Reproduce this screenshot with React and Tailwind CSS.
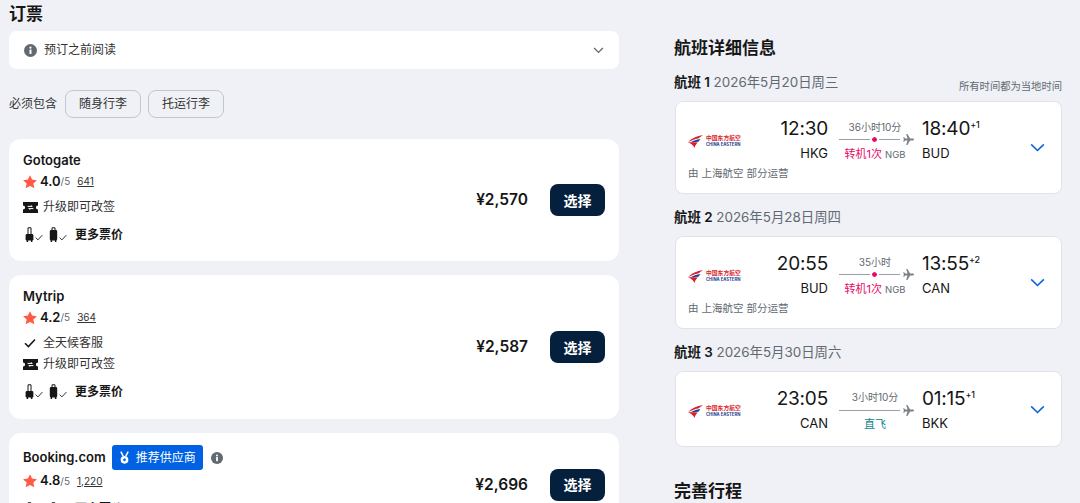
import React from "react";

const font = { fontFamily: '"Inter", "Noto Sans CJK SC", sans-serif' };

function InfoIcon({ className }) {
  return (
    <svg viewBox="0 0 12 12" className={className}>
      <circle cx="6" cy="6" r="6" fill="#626971" />
      <rect x="5.1" y="5" width="1.8" height="4.2" rx="0.4" fill="#fff" />
      <circle cx="6" cy="3.4" r="1" fill="#fff" />
    </svg>
  );
}

function Star() {
  return (
    <svg viewBox="0 0 14 14" className="w-[14px] h-[14px] shrink-0">
      <path d="M7 .2l2.100 4.400 4.800.6-3.500 3.300.9 4.800L7 11l-4.300 2.300.9-4.800L.1 5.200l4.800-.6z" fill="#ff5b45" />
    </svg>
  );
}

function Ticket() {
  return (
    <svg viewBox="0 0 15 11" className="w-[15px] h-[11px] shrink-0">
      <path d="M0 0h15v3.400a2 2 0 0 0 0 4.200V11H0V7.600a2 2 0 0 0 0-4.200z" fill="#161616" />
      <path d="M4.600 4.400h4.600l-1-1M10.400 6.600H5.800l1 1" stroke="#fff" strokeWidth="1" fill="none" />
    </svg>
  );
}

function Check({ className }) {
  return (
    <svg viewBox="0 0 12 10" className={className}>
      <path d="M1 5.200l3.400 3.400L11 1.400" stroke="currentColor" strokeWidth="1.500" fill="none" />
    </svg>
  );
}

function Bag({ big }) {
  return (
    <span className="flex items-end">
      <svg viewBox="0 0 9 15" className="w-[9px] h-[15px]">
        {big ? (
          <>
            <path d="M3 3V.8h3V3" stroke="#161616" strokeWidth="1" fill="none" />
            <rect x="0.8" y="3" width="7.400" height="10.500" rx="1.400" fill="#161616" />
            <rect x="1.600" y="13" width="1.500" height="2" fill="#161616" />
            <rect x="5.900" y="13" width="1.500" height="2" fill="#161616" />
          </>
        ) : (
          <>
            <path d="M3 7V.8h3V7" stroke="#161616" strokeWidth="1" fill="none" />
            <rect x="0.600" y="7" width="7.800" height="6.600" rx="1.400" fill="#161616" />
            <rect x="1.600" y="13" width="1.500" height="2" fill="#161616" />
            <rect x="5.900" y="13" width="1.500" height="2" fill="#161616" />
          </>
        )}
      </svg>
      <Check className="w-[8px] h-[7px] ml-[1px] mb-[1px] text-[#333]" />
    </span>
  );
}

function Medal() {
  return (
    <svg viewBox="0 0 12 14" className="w-[11px] h-[14px]">
      <path d="M2 0l2.600 5M10 0L7.400 5" stroke="#fff" strokeWidth="1.600" fill="none" />
      <circle cx="6" cy="9" r="4.200" fill="#fff" />
      <circle cx="6" cy="9" r="1.500" fill="#0062e3" />
    </svg>
  );
}

function Offer({ name, badge, rating, count, lines, price, className }) {
  return (
    <div className={`bg-white rounded-xl px-[14px] pt-[12px] flex justify-between items-center shrink-0 overflow-hidden ${className}`}>
      <div className="self-start">
        <div className="flex items-center min-h-[18px]">
          <span className="text-[13px] font-semibold text-[#161616]">{name}</span>
          {badge && (
            <>
              <span className="ml-[6px] h-[25px] w-[91px] bg-[#0062e3] rounded-[3px] flex items-center justify-center gap-[6px] text-white text-[12px]">
                <Medal />
                推荐供应商
              </span>
              <InfoIcon className="w-[12px] h-[12px] ml-[8px]" />
            </>
          )}
        </div>
        <div className="flex items-center h-[18px] mt-[2px]">
          <Star />
          <span className="ml-[3px] text-[13px] font-semibold text-[#161616]">{rating}</span>
          <span className="text-[10px] text-[#626971]">/5</span>
          <span className="ml-[7px] text-[10px] text-[#333] underline">{count}</span>
        </div>
        {lines.length > 0 ? (
          <div className="mt-[6px] mb-[8px] flex flex-col">
            {lines.map((l) => (
              <div key={l} className="flex items-center h-[21px] text-[12px] text-[#333]">
                <span className="w-[20px] flex">
                  {l === "全天候客服" ? <Check className="w-[12px] h-[10px] ml-[1px] text-[#161616]" /> : <Ticket />}
                </span>
                {l}
              </div>
            ))}
          </div>
        ) : (
          <div className="h-[10px]" />
        )}
        <div className="flex items-center h-[18px] pl-[2px]">
          <Bag />
          <span className="w-[6px]" />
          <Bag big />
          <span className="ml-[8px] text-[12px] font-semibold text-[#161616]">更多票价</span>
        </div>
      </div>
      <div className="flex items-center gap-[22px] -mt-[12px]">
        <span className="text-[15.500px] font-semibold text-[#161616]">{price}</span>
        <button className="w-[55px] h-[32px] rounded-lg bg-[#05203c] text-white text-[14px] font-semibold">选择</button>
      </div>
    </div>
  );
}

function Logo() {
  return (
    <div className="w-[54px] flex items-center shrink-0">
      <svg viewBox="0 0 15 13" className="w-[15px] h-[13px] shrink-0">
        <path d="M15 0C9 .8 3.500 3.400 0 7.200 3.400 5.400 6.500 4.300 10.200 3.600 11.800 2.400 13.400 1 15 0z" fill="#d81e2c" />
        <path d="M12.500 4C8.500 4.600 5.200 5.800 2.600 7.300 5.400 6.900 8 6.700 10.400 6.700z" fill="#1c3f94" />
        <path d="M0 7.400C3 8.200 5.200 10 6.600 13 7 10.800 8 9 9.800 7.600 6.600 7.400 3.500 7.200 0 7.400z" fill="#d81e2c" />
      </svg>
      <div className="ml-[3px] flex flex-col items-start leading-none">
        <span className="text-[5.800px] font-bold text-[#d81e2c] leading-[6.500px] whitespace-nowrap">中国东方航空</span>
        <span className="text-[4.200px] font-bold text-[#1c3f94] leading-[5.500px] whitespace-nowrap">CHINA EASTERN</span>
      </div>
    </div>
  );
}

function Plane() {
  return (
    <svg viewBox="0 0 12 12" className="w-[11px] h-[11px] shrink-0 ml-[3px]">
      <path d="M12 6c0-.6-.6-1-1.300-1H7.800L4.800 0H3.500l1.400 5H2.400L1.200 3.500H.2L1 6l-.8 2.500h1L2.400 7h2.500l-1.400 5h1.300l3-5h2.900C11.400 7 12 6.600 12 6z" fill="#7c8089" />
    </svg>
  );
}

function Flight({ label, date, note, dep, depCode, arr, plus, arrCode, dur, stop, operated }) {
  return (
    <div className="shrink-0">
      <div className="flex items-baseline justify-between h-[20px]">
        <div className="text-[13.400px] text-[#626971] -ml-px">
          <span className="font-semibold text-[#161616]">{label}</span> {date}
        </div>
        {note && <span className="text-[10.300px] text-[#626971] relative top-[3px]">{note}</span>}
      </div>
      <div className={`mt-[9px] bg-white rounded-lg border border-[#e0e4e9] pl-[12px] flex items-center ${operated ? "h-[93px]" : "h-[76px]"}`}>
        <div className={`flex-1 flex flex-col self-start ${operated ? "h-full" : ""}`}>
          <div className="flex items-center h-[70px] pt-[8px]">
            <Logo />
            <div className="w-[86px] text-right">
              <div className="text-[19px] tracking-[-0.2px] leading-[24px] text-[#161616]">{dep}</div>
              <div className="text-[13px] leading-[24px] text-[#161616]">{depCode}</div>
            </div>
            <div className="w-[75px] ml-[11px] flex flex-col items-center">
              <div className="text-[10px] leading-[14px] text-[#626971] w-full text-center pr-[3px]">{dur}</div>
              <div className="flex items-center w-full h-[12px]">
                <div className="flex-1 h-px bg-[#9aa0aa] flex items-center">
                  {stop && <span className="ml-[33px] w-[5px] h-[5px] rounded-full bg-[#e70866] outline-2 outline-white" />}
                </div>
                <Plane />
              </div>
              <div className="text-[11px] leading-[16px] w-full text-center pr-[3px] whitespace-nowrap">
                {stop ? (
                  <>
                    <span className="text-[#e70866]">转机1次</span> <span className="text-[9.500px] text-[#626971]">{stop}</span>
                  </>
                ) : (
                  <span className="text-[#0c838a]">直飞</span>
                )}
              </div>
            </div>
            <div className="ml-[8px] flex-1">
              <div className="text-[19px] tracking-[-0.2px] leading-[24px] text-[#161616]">
                {arr}
                <sup className="text-[9px] font-medium top-[-7px] relative align-baseline">{plus}</sup>
              </div>
              <div className="text-[13px] leading-[24px] text-[#161616]">{arrCode}</div>
            </div>
          </div>
          {operated && <div className="text-[10.500px] leading-[14px] text-[#626971] -mt-[5px]">{operated}</div>}
        </div>
        <svg viewBox="0 0 16 10" className="w-[15px] h-[9px] mr-[16px] text-[#0062e3]">
          <path d="M1 1.500l7 6.800 7-6.800" stroke="currentColor" strokeWidth="1.700" fill="none" />
        </svg>
      </div>
    </div>
  );
}

export default function App() {
  return (
    <div className="w-[1080px] h-[503px] overflow-hidden bg-[#eff1f6] flex" style={font}>
      <div className="w-[610px] ml-[9px] flex flex-col">
        <h1 className="text-[17px] leading-[24px] font-semibold text-[#161616] mt-[2px]">订票</h1>
        <div className="mt-[5px] h-[38px] bg-white rounded-lg flex items-center pl-[15px] pr-[15px] text-[12px] text-[#333] shrink-0">
          <InfoIcon className="w-[13px] h-[13px] mr-[7px]" />
          预订之前阅读
          <svg viewBox="0 0 12 8" className="w-[11px] h-[7px] ml-auto">
            <path d="M1 1.200l5 5 5-5" stroke="#626971" strokeWidth="1.500" fill="none" />
          </svg>
        </div>
        <div className="mt-[21px] flex items-center h-[28px] text-[12px] text-[#333] shrink-0">
          必须包含
          <button className="ml-[8px] w-[76px] h-[28px] rounded-lg border border-[#c1c7cf] text-[12px] text-[#333]">随身行李</button>
          <button className="ml-[7px] w-[76px] h-[28px] rounded-lg border border-[#c1c7cf] text-[12px] text-[#333]">托运行李</button>
        </div>
        <div className="mt-[21px] flex flex-col gap-[14px]">
          <Offer name="Gotogate" rating="4.0" count="641" lines={["升级即可改签"]} price="¥2,570" className="h-[122px]" />
          <Offer name="Mytrip" rating="4.2" count="364" lines={["全天候客服", "升级即可改签"]} price="¥2,587" className="h-[144px]" />
          <Offer name="Booking.com" badge rating="4.8" count="1,220" lines={[]} price="¥2,696" className="h-[103px]" />
        </div>
      </div>
      <div className="w-[387px] ml-[56px] flex flex-col">
        <h2 className="text-[17px] leading-[24px] font-semibold text-[#161616] mt-[36px] -ml-px">航班详细信息</h2>
        <div className="mt-[12px] flex flex-col gap-[13px]">
          <Flight label="航班 1" date="2026年5月20日周三" note="所有时间都为当地时间" dep="12:30" depCode="HKG" arr="18:40" plus="+1" arrCode="BUD" dur="36小时10分" stop="NGB" operated="由 上海航空 部分运营" />
          <Flight label="航班 2" date="2026年5月28日周四" dep="20:55" depCode="BUD" arr="13:55" plus="+2" arrCode="CAN" dur="35小时" stop="NGB" operated="由 上海航空 部分运营" />
          <Flight label="航班 3" date="2026年5月30日周六" dep="23:05" depCode="CAN" arr="01:15" plus="+1" arrCode="BKK" dur="3小时10分" />
        </div>
        <h2 className="text-[17px] leading-[24px] font-semibold text-[#161616] mt-[32px] -ml-px">完善行程</h2>
      </div>
    </div>
  );
}
